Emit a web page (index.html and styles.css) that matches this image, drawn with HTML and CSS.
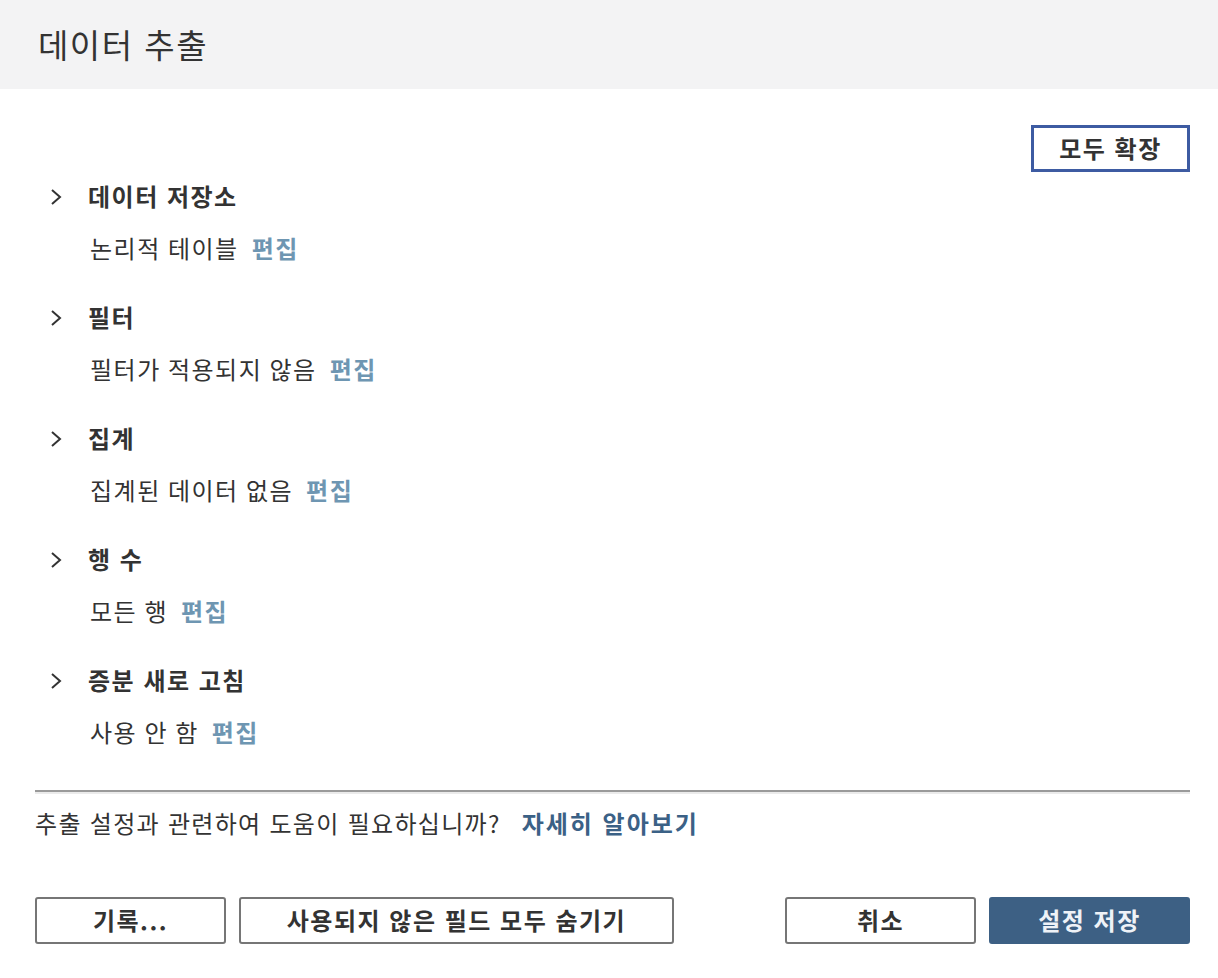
FILE: index.html
```html
<!DOCTYPE html>
<html lang="ko">
<head>
<meta charset="utf-8">
<title>데이터 추출</title>
<link rel="stylesheet" href="styles.css">
</head>
<body>
<div class="dialog">
  <header class="header">
    <h1 class="title">데이터 추출</h1>
  </header>
  <main class="content">
    <div class="toolbar">
      <button class="btn btn-expand">모두 확장</button>
    </div>
    <section class="section">
      <div class="section-head">
        <svg class="chev" width="12" height="18" viewBox="0 0 12 18"><polyline points="2,2 10,9 2,16" fill="none" stroke="#333" stroke-width="2"/></svg>
        <span class="section-title">데이터 저장소</span>
      </div>
      <div class="section-sub">논리적 테이블<a class="edit">편집</a></div>
    </section>
    <section class="section">
      <div class="section-head">
        <svg class="chev" width="12" height="18" viewBox="0 0 12 18"><polyline points="2,2 10,9 2,16" fill="none" stroke="#333" stroke-width="2"/></svg>
        <span class="section-title">필터</span>
      </div>
      <div class="section-sub">필터가 적용되지 않음<a class="edit">편집</a></div>
    </section>
    <section class="section">
      <div class="section-head">
        <svg class="chev" width="12" height="18" viewBox="0 0 12 18"><polyline points="2,2 10,9 2,16" fill="none" stroke="#333" stroke-width="2"/></svg>
        <span class="section-title">집계</span>
      </div>
      <div class="section-sub">집계된 데이터 없음<a class="edit">편집</a></div>
    </section>
    <section class="section">
      <div class="section-head">
        <svg class="chev" width="12" height="18" viewBox="0 0 12 18"><polyline points="2,2 10,9 2,16" fill="none" stroke="#333" stroke-width="2"/></svg>
        <span class="section-title">행 수</span>
      </div>
      <div class="section-sub">모든 행<a class="edit">편집</a></div>
    </section>
    <section class="section">
      <div class="section-head">
        <svg class="chev" width="12" height="18" viewBox="0 0 12 18"><polyline points="2,2 10,9 2,16" fill="none" stroke="#333" stroke-width="2"/></svg>
        <span class="section-title">증분 새로 고침</span>
      </div>
      <div class="section-sub">사용 안 함<a class="edit">편집</a></div>
    </section>
  </main>
  <footer class="footer">
    <div class="divider"></div>
    <p class="help">추출 설정과 관련하여 도움이 필요하십니까?<a class="learn">자세히 알아보기</a></p>
    <div class="actions">
      <div class="actions-left">
        <button class="btn btn-history">기록...</button>
        <button class="btn btn-hide">사용되지 않은 필드 모두 숨기기</button>
      </div>
      <div class="actions-right">
        <button class="btn btn-cancel">취소</button>
        <button class="btn btn-primary">설정 저장</button>
      </div>
    </div>
  </footer>
</div>
</body>
</html>
```

FILE: styles.css
```css
* { box-sizing: border-box; }
html, body {
  margin: 0;
  padding: 0;
  background: #ffffff;
}
body {
  font-family: "Noto Sans CJK KR", "Noto Sans", sans-serif;
  color: #333333;
  width: 1218px;
  height: 978px;
  overflow: hidden;
}
.header {
  height: 89px;
  background: #f3f3f4;
  padding-left: 38px;
  display: flex;
  align-items: center;
}
.title {
  margin: 0;
  font-size: 33px;
  font-weight: 400;
  letter-spacing: 1.5px;
  line-height: 40px;
  color: #333;
  padding-bottom: 2px;
}
.content {
  padding: 36px 28px 0 0;
}
.toolbar {
  display: flex;
  justify-content: flex-end;
  margin-bottom: 10px;
}
.btn {
  font-family: "Noto Sans CJK KR", "Noto Sans", sans-serif;
  font-size: 24px;
  font-weight: 700;
  letter-spacing: 1.5px;
  color: #333;
  background: #fff;
  height: 47px;
  border: 2px solid #767676;
  border-radius: 3px;
  padding: 0 0 2px 0;
  line-height: 1;
  display: flex;
  align-items: center;
  justify-content: center;
}
.btn-expand {
  width: 159px;
  border: 3px solid #3d5ba2;
  border-radius: 0;
}
.section {
  padding-left: 50px;
  margin-bottom: 40px;
}
.section-head {
  display: flex;
  align-items: center;
  height: 30px;
}
.chev {
  display: block;
  margin-right: 26px;
}
.section-title {
  font-size: 24px;
  font-weight: 700;
  letter-spacing: 1.5px;
  line-height: 30px;
  margin-top: -3px;
}
.section-sub {
  margin-top: 21px;
  padding-left: 40px;
  font-size: 24px;
  letter-spacing: 1.5px;
  word-spacing: -1px;
  line-height: 30px;
  height: 30px;
}
.edit {
  font-weight: 700;
  color: #6e96b2;
  margin-left: 13px;
}
.footer {
  padding: 0 28px 0 35px;
  margin-top: 43px;
}
.divider {
  height: 4px;
  border-top: 2px solid #9a9a9a;
  background: #ebebeb;
}
.help {
  margin: 14px 0 0 0;
  font-size: 24px;
  letter-spacing: 1.3px;
  line-height: 30px;
}
.learn {
  font-weight: 700;
  color: #3b6186;
  margin-left: 21px;
  letter-spacing: 2px;
}
.actions {
  margin-top: 59px;
  display: flex;
  justify-content: space-between;
}
.actions-left, .actions-right {
  display: flex;
  gap: 13px;
}
.btn-history { width: 191px; }
.btn-hide { width: 435px; }
.btn-cancel { width: 191px; }
.btn-primary {
  width: 201px;
  background: #3d6084;
  border-color: #3d6084;
  color: #eef2f7;
}
```
